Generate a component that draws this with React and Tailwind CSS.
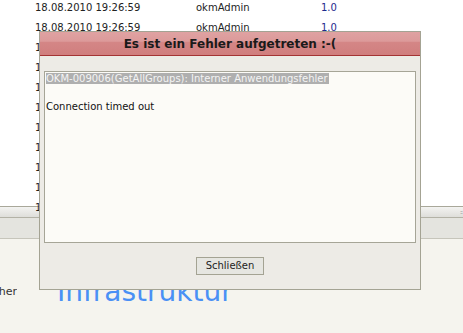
export default function App() {
  const rows = Array.from({ length: 11 });
  return (
    <div className="relative w-[463px] h-[333px] overflow-hidden bg-[#f5f4ee] font-['DejaVu_Sans',sans-serif] text-[10px] text-[#222]">
      <div className="flex h-[206px] bg-white">
        <div className="flex flex-col -mt-[2px]">
          {rows.map((_, i) => (
            <div key={i} className="flex h-[20px] items-center leading-[20px]">
              <span className="ml-[35px] w-[161px]">18.08.2010 19:26:59</span>
              <span className="w-[125px]">okmAdmin</span>
              <span className="text-[#1d2a8e]">1.0</span>
            </div>
          ))}
        </div>
      </div>
      <div className="h-[12px] border-t border-b border-t-[#a9a89a] border-b-[#b3b2a6] bg-gradient-to-b from-[#f3f3f1] to-[#dededa] flex justify-end items-start pt-[2px] pr-[1px]">
        <span className="text-[6px] leading-[6px] text-[#888] tracking-[-1px]">::</span>
      </div>
      <div className="h-[21px] bg-[#e4e4df] border-b border-[#c6c5bb]"></div>
      <div className="relative h-[94px]">
        <div className="flex items-end h-[62px]">
          <div className="w-[17px] overflow-hidden flex justify-end text-[11px] leading-[14px] text-[#333] mb-[2px]">
            <span className="whitespace-nowrap">Sucher</span>
          </div>
          <div className="ml-[40px] text-[28px] leading-[30px] text-[#4a90f5] whitespace-nowrap -mb-[6px]">Infrastruktur</div>
        </div>
      </div>

      <div className="absolute left-[39px] top-[31px] w-[382px] h-[259px] border border-[#a4a393] bg-[#edebe6] flex flex-col">
        <div className="h-[24px] border-b border-[#a43434] bg-[linear-gradient(#dfa2a2_0,#dc9a9a_40%,#d48686_45%,#d07e7e_100%)] flex items-center justify-center">
          <span className="font-bold text-[12px] text-[#1a1a1a] leading-[14px]">Es ist ein Fehler aufgetreten :-(</span>
        </div>
        <div className="mt-[15px] ml-[4px] w-[372px] h-[172px] border border-[#a6a597] bg-[#fcfbf7] px-[1px] leading-[14px] text-[10px] text-[#111]">
          <div>
            <span className="bg-[#afafaf] text-[#f4f4f4] pr-[1px]">OKM-009006(GetAllGroups): Interner Anwendungsfehler</span>
          </div>
          <div className="h-[14px]"></div>
          <div>Connection timed out</div>
        </div>
        <div className="flex justify-center mt-[14px]">
          <div className="w-[68px] h-[18px] border border-[#a4a393] bg-[#e6e6e1] flex items-center justify-center text-[10px] text-[#222] leading-[12px]">
            Schließen
          </div>
        </div>
      </div>
    </div>
  );
}
